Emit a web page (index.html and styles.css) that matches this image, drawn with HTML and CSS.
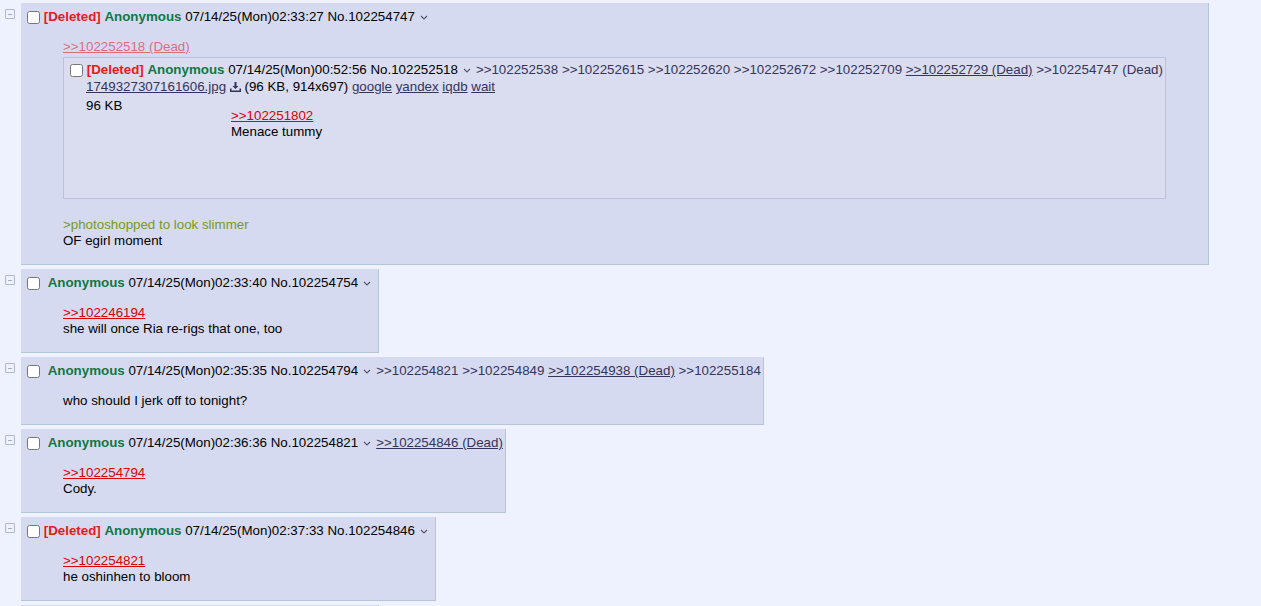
FILE: index.html
```html
<!DOCTYPE html>
<html lang="en">
<head>
  <meta charset="UTF-8">
  <title>/vt/ - Thread</title>
  <link rel="stylesheet" href="styles.css">
</head>
<body>

  <div class="thread">

    <!-- Post 102254747 -->
    <div class="postContainer">
      <div class="sideArrows"><span class="hide-btn"></span></div>
      <div class="post reply">
        <div class="postInfo">
          <input type="checkbox" class="postCheck">
          <span class="deleted">[Deleted]</span>
          <span class="name">Anonymous</span>
          <span class="dateTime">07/14/25(Mon)02:33:27</span>
          <span class="postNum">No.102254747</span><span class="menu-btn"><svg width="8" height="5" viewBox="0 0 8 5"><path d="M1 1l3 3 3-3" /></svg></span>
        </div>
        <blockquote class="postMessage">
          <a class="quotelink inlined">&gt;&gt;102252518 (Dead)</a>
          <div class="inline">
            <div class="postInfo">
              <input type="checkbox" class="postCheck">
              <span class="deleted">[Deleted]</span>
              <span class="name">Anonymous</span>
              <span class="dateTime">07/14/25(Mon)00:52:56</span>
              <span class="postNum">No.102252518</span><span class="menu-btn"><svg width="8" height="5" viewBox="0 0 8 5"><path d="M1 1l3 3 3-3" /></svg></span><span class="backlink">&gt;&gt;102252538</span>
              <span class="backlink">&gt;&gt;102252615</span>
              <span class="backlink">&gt;&gt;102252620</span>
              <span class="backlink">&gt;&gt;102252672</span>
              <span class="backlink">&gt;&gt;102252709</span>
              <span class="backlink dead">&gt;&gt;102252729 (Dead)</span>
              <span class="backlink">&gt;&gt;102254747 (Dead)</span>
            </div>
            <div class="file">
              <div class="fileText">
                <a class="file-link">1749327307161606.jpg</a>
                <svg class="dl-icon" width="11" height="10" viewBox="0 0 11 10"><path d="M4.5 0h2v4h2l-3 3-3-3h2z M0 6.5h1.5v2h8v-2H11V10H0z" /></svg>
                (96 KB, 914x697)
                <a class="file-link">google</a>
                <a class="file-link">yandex</a>
                <a class="file-link">iqdb</a>
                <a class="file-link">wait</a>
              </div>
              <div class="fileThumb">96 KB</div>
            </div>
            <blockquote class="postMessage">
              <a class="quotelink">&gt;&gt;102251802</a><br>
              Menace tummy
            </blockquote>
          </div>
          <br>
          <span class="quote">&gt;photoshopped to look slimmer</span><br>
          OF egirl moment
        </blockquote>
      </div>
    </div>

    <!-- Post 102254754 -->
    <div class="postContainer">
      <div class="sideArrows"><span class="hide-btn"></span></div>
      <div class="post reply">
        <div class="postInfo">
          <input type="checkbox" class="postCheck">
          <span class="name">Anonymous</span>
          <span class="dateTime">07/14/25(Mon)02:33:40</span>
          <span class="postNum">No.102254754</span><span class="menu-btn"><svg width="8" height="5" viewBox="0 0 8 5"><path d="M1 1l3 3 3-3" /></svg></span>
        </div>
        <blockquote class="postMessage">
          <a class="quotelink">&gt;&gt;102246194</a><br>
          she will once Ria re-rigs that one, too
        </blockquote>
      </div>
    </div>

    <!-- Post 102254794 -->
    <div class="postContainer">
      <div class="sideArrows"><span class="hide-btn"></span></div>
      <div class="post reply">
        <div class="postInfo">
          <input type="checkbox" class="postCheck">
          <span class="name">Anonymous</span>
          <span class="dateTime">07/14/25(Mon)02:35:35</span>
          <span class="postNum">No.102254794</span><span class="menu-btn"><svg width="8" height="5" viewBox="0 0 8 5"><path d="M1 1l3 3 3-3" /></svg></span><span class="backlink">&gt;&gt;102254821</span>
          <span class="backlink">&gt;&gt;102254849</span>
          <span class="backlink dead">&gt;&gt;102254938 (Dead)</span>
          <span class="backlink">&gt;&gt;102255184</span>
        </div>
        <blockquote class="postMessage">
          who should I jerk off to tonight?
        </blockquote>
      </div>
    </div>

    <!-- Post 102254821 -->
    <div class="postContainer">
      <div class="sideArrows"><span class="hide-btn"></span></div>
      <div class="post reply">
        <div class="postInfo">
          <input type="checkbox" class="postCheck">
          <span class="name">Anonymous</span>
          <span class="dateTime">07/14/25(Mon)02:36:36</span>
          <span class="postNum">No.102254821</span><span class="menu-btn"><svg width="8" height="5" viewBox="0 0 8 5"><path d="M1 1l3 3 3-3" /></svg></span><span class="backlink dead">&gt;&gt;102254846 (Dead)</span>
        </div>
        <blockquote class="postMessage">
          <a class="quotelink">&gt;&gt;102254794</a><br>
          Cody.
        </blockquote>
      </div>
    </div>

    <!-- Post 102254846 -->
    <div class="postContainer">
      <div class="sideArrows"><span class="hide-btn"></span></div>
      <div class="post reply">
        <div class="postInfo">
          <input type="checkbox" class="postCheck">
          <span class="deleted">[Deleted]</span>
          <span class="name">Anonymous</span>
          <span class="dateTime">07/14/25(Mon)02:37:33</span>
          <span class="postNum">No.102254846</span><span class="menu-btn"><svg width="8" height="5" viewBox="0 0 8 5"><path d="M1 1l3 3 3-3" /></svg></span>
        </div>
        <blockquote class="postMessage">
          <a class="quotelink">&gt;&gt;102254821</a><br>
          he oshinhen to bloom
        </blockquote>
      </div>
    </div>

    <!-- Post 102254849 -->
    <div class="postContainer">
      <div class="sideArrows"><span class="hide-btn"></span></div>
      <div class="post reply">
        <div class="postInfo">
          <input type="checkbox" class="postCheck">
          <span class="name">Anonymous</span>
          <span class="dateTime">07/14/25(Mon)02:37:50</span>
          <span class="postNum">No.102254849</span><span class="menu-btn"><svg width="8" height="5" viewBox="0 0 8 5"><path d="M1 1l3 3 3-3" /></svg></span>
        </div>
        <blockquote class="postMessage">
          <a class="quotelink">&gt;&gt;102254794</a><br>
          Pippa
        </blockquote>
      </div>
    </div>

  </div>

</body>
</html>
```

FILE: styles.css
```css
/* General styling */
body {
  margin: 0;
  background-color: #eef2ff;
  color: #000;
  font-family: "Liberation Sans", Arial, sans-serif;
  font-size: 10pt;
  line-height: 16px;
}

.thread {
  padding-top: 3px;
}

/* Post container */
.postContainer {
  display: flex;
  align-items: flex-start;
  margin-bottom: 4px;
}

.sideArrows {
  width: 16px;
  padding: 6px 0 0 5px;
  flex-shrink: 0;
}

.hide-btn {
  display: block;
  width: 8px;
  height: 8px;
  border: 1px solid #b0b8cc;
  border-radius: 1px;
  position: relative;
}

.hide-btn::before {
  content: '';
  position: absolute;
  left: 2px;
  right: 2px;
  top: 4px;
  height: 1px;
  background: #a4acc2;
}

/* Reply box */
.reply {
  background-color: #d6daf0;
  border: 1px solid #b7c5d9;
  border-left: none;
  border-top: none;
  padding: 2px;
  width: fit-content;
}

.postInfo {
  display: block;
  white-space: nowrap;
  height: 19px;
  line-height: 19px;
  padding-top: 2px;
}

.postCheck {
  width: 13px;
  height: 13px;
  margin: 3px 0 3px 4px;
  vertical-align: -3px;
}

.deleted {
  color: #e81a1a;
  font-weight: bold;
}

.name {
  color: #117743;
  font-weight: bold;
}

.postCheck + .name {
  margin-left: 4px;
}

.menu-btn {
  display: inline-block;
  width: 8px;
  margin: 0 5px 0 5px;
  vertical-align: 1px;
}

.menu-btn svg {
  display: block;
  fill: none;
  stroke: #55556e;
  stroke-width: 1.1;
}

.backlink {
  color: #34345c;
}

.backlink.dead {
  text-decoration: underline;
}

/* Message */
.postMessage {
  margin: 13px 40px 13px 40px;
}

.quotelink {
  color: #d00;
  text-decoration: underline;
}

.quotelink.inlined {
  opacity: 0.5;
}

.quote {
  color: #789922;
}

/* Inlined quote */
.inline {
  display: table;
  margin: 2px 0;
  padding: 0 2px;
  border: 1px solid #b7c5d9;
  background-color: #dadcef;
}

.inline .postMessage {
  margin: 13px 40px 0 40px;
}

.fileText {
  margin-left: 20px;
  color: #000;
}

.file-link {
  color: #34345c;
  text-decoration: underline;
}

.dl-icon {
  fill: #34345c;
  vertical-align: -1px;
}

.fileThumb {
  float: left;
  width: 125px;
  height: 95px;
  margin: 3px 20px 5px 20px;
}
```
